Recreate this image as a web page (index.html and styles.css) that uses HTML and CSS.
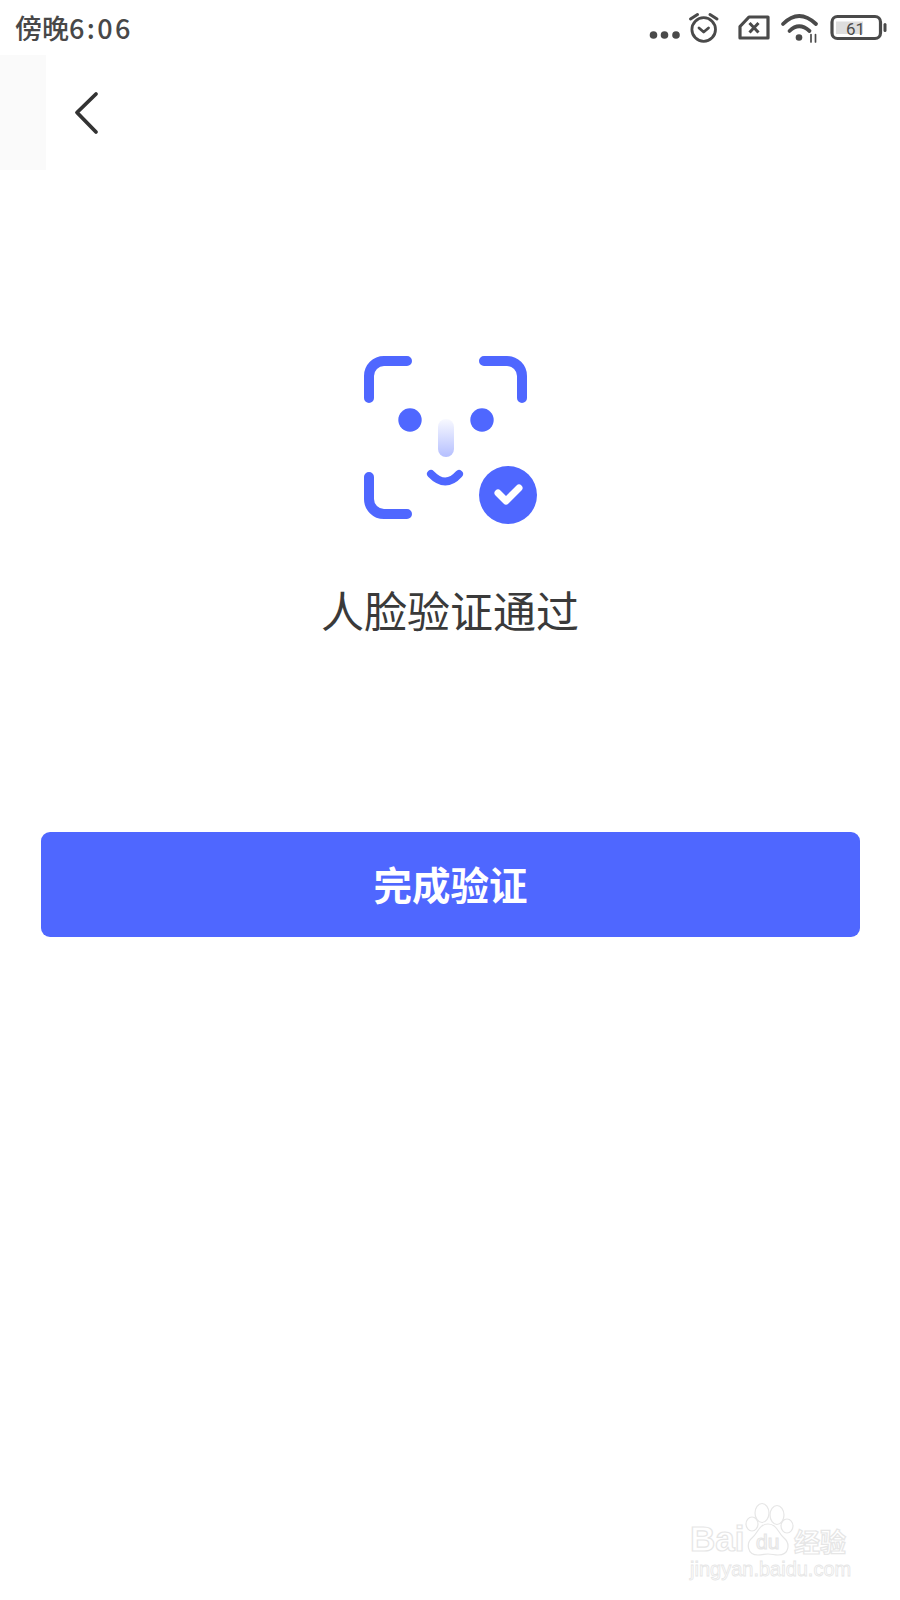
FILE: index.html
```html
<!DOCTYPE html>
<html lang="zh-CN">
<head>
    <meta charset="UTF-8">
    <meta name="viewport" content="width=device-width, initial-scale=1.0">
    <link rel="stylesheet" href="styles.css">
    <title>人脸验证通过</title>
</head>
<body>
    <div class="page">
        <div class="status-bar">
            <span class="status-time">傍晚<span class="status-digits">6:06</span></span>
            <svg class="status-icons" width="270" height="55" viewBox="0 0 270 55">
                <g fill="#4a4a4a">
                    <circle cx="23.5" cy="35" r="3.8"/>
                    <circle cx="34.5" cy="35" r="3.8"/>
                    <circle cx="46" cy="35" r="3.8"/>
                </g>
                <!-- alarm -->
                <g fill="none" stroke="#4a4a4a" stroke-linecap="round" stroke-linejoin="round">
                    <circle cx="73.7" cy="29.5" r="11.8" stroke-width="2.8"/>
                    <path d="M60.5 19L67.5 14.5M80 14.5L87 19" stroke-width="3"/>
                    <path d="M69 28L73.7 32L78.5 28" stroke-width="2.8"/>
                </g>
                <!-- sim -->
                <g fill="none" stroke="#4a4a4a" stroke-linejoin="round">
                    <path d="M110 26.500L119 17H138V38H110Z" stroke-width="3.200"/>
                    <path d="M119.500 23L128.500 32.500M128.500 23L119.500 32.500" stroke-width="3"/>
                </g>
                <!-- wifi -->
                <g fill="none" stroke="#4a4a4a" stroke-linecap="round">
                    <path d="M153 24Q169 8 186 24" stroke-width="3.800"/>
                    <path d="M159.500 31Q169 21.500 179.500 31" stroke-width="3.800"/>
                    <path d="M181 34.500V42M185.500 34.500V42" stroke-width="1.700"/>
                </g>
                <circle cx="169" cy="37.500" r="3.300" fill="#4a4a4a"/>
                <!-- battery -->
                <rect x="202" y="16.500" width="48.500" height="22" rx="5.500" fill="none" stroke="#4a4a4a" stroke-width="3.200"/>
                <rect x="206" y="21.500" width="27" height="12.500" fill="#dedede"/>
                <rect x="253.500" y="23" width="3" height="9" rx="1.500" fill="#4a4a4a"/>
                <text class="battery-num" x="225.500" y="34.500" text-anchor="middle">61</text>
            </svg>
        </div>

        <div class="nav-bar">
            <div class="nav-side"></div>
            <svg class="back" width="26" height="46" viewBox="0 0 26 46">
                <path d="M23 4L4 22.500L23 42" fill="none" stroke="#333" stroke-width="3.800" stroke-linecap="round" stroke-linejoin="round"/>
            </svg>
        </div>

        <div class="result">
            <svg class="face" width="220" height="200" viewBox="0 0 220 200">
                <defs>
                    <linearGradient id="nose" x1="0" y1="0" x2="0" y2="1">
                        <stop offset="0" stop-color="#4f67ff" stop-opacity="0.04"/>
                        <stop offset="1" stop-color="#4f67ff" stop-opacity="0.42"/>
                    </linearGradient>
                </defs>
                <g fill="none" stroke="#4f67ff" stroke-width="10" stroke-linecap="round">
                    <path d="M29 58V36A15 15 0 0 1 44 21H67"/>
                    <path d="M144 21H167A15 15 0 0 1 182 36V58"/>
                    <path d="M29 137V159A15 15 0 0 0 44 174H67"/>
                    <path d="M91 134Q105.500 149 119 134" stroke-width="8"/>
                </g>
                <circle cx="70" cy="80" r="11.700" fill="#4f67ff"/>
                <circle cx="142" cy="80" r="11.700" fill="#4f67ff"/>
                <rect x="98" y="79" width="16" height="38" rx="8" fill="url(#nose)"/>
                <circle cx="168" cy="155" r="29" fill="#4f67ff"/>
                <path d="M158 153L166 161L179 148" fill="none" stroke="#fff" stroke-width="7" stroke-linecap="round" stroke-linejoin="round"/>
            </svg>
            <h1 class="result-title">人脸验证通过</h1>
        </div>

        <div class="actions">
            <div class="btn-done">完成验证</div>
        </div>

        <svg class="watermark" width="240" height="120" viewBox="0 0 240 120">
            <g class="wm-line">
                <ellipse cx="102" cy="33" rx="7" ry="9.500"/>
                <ellipse cx="117" cy="35" rx="7" ry="9.500"/>
                <ellipse cx="92" cy="44" rx="6" ry="7"/>
                <ellipse cx="127" cy="46" rx="6" ry="7"/>
                <path d="M108 44C99 44 98 53 92 58C86 63 87 75 98 75C102 75 105 74 108 74C112 74 114 75 118 75C130 75 130 63 124 58C118 53 117 44 108 44Z"/>
                <text class="wm-bai" x="30" y="71">Bai</text>
                <text class="wm-du" x="96" y="69">du</text>
                <text class="wm-cn" x="134" y="72">经验</text>
                <text class="wm-url" x="30" y="96">jingyan.baidu.com</text>
            </g>
        </svg>
    </div>
</body>
</html>
```

FILE: styles.css
```css
* {
    box-sizing: border-box;
}
html, body {
    margin: 0;
    padding: 0;
}
body {
    background-color: #fff;
    font-family: "Noto Sans CJK SC", "Noto Sans", sans-serif;
}
.page {
    position: relative;
    width: 900px;
    height: 1600px;
    overflow: hidden;
}

/* status bar */
.status-bar {
    display: flex;
    justify-content: space-between;
    align-items: center;
    height: 55px;
    padding-left: 15px;
}
.status-time {
    font-size: 27px;
    font-weight: 500;
    color: #484848;
}
.status-digits {
    letter-spacing: 2.4px;
}
.battery-num {
    font-family: "Roboto", sans-serif;
    font-size: 17px;
    fill: #4a4a4a;
}

/* nav */
.nav-bar {
    display: flex;
    align-items: center;
    height: 115px;
}
.nav-side {
    width: 46px;
    height: 100%;
    background-color: #fafafa;
}
.back {
    margin-left: 27px;
}

/* result */
.result {
    display: flex;
    flex-direction: column;
    align-items: center;
    padding-top: 170px;
}
.face {
    display: block;
}
.result-title {
    margin: 39px 0 0;
    font-size: 43px;
    font-weight: 400;
    line-height: 60px;
    color: #3a3a3a;
}

/* button */
.actions {
    padding: 193px 40px 0 41px;
}
.btn-done {
    height: 105px;
    line-height: 103px;
    border-radius: 9px;
    background-color: #4f67ff;
    color: #fff;
    font-size: 38.5px;
    font-weight: 700;
    text-align: center;
}

/* watermark */
.watermark {
    position: absolute;
    right: 0;
    bottom: 0;
}
.wm-line {
    fill: #fff;
    stroke: #e6e6e6;
    stroke-width: 1.2;
}
.wm-bai {
    font-family: "Liberation Sans", sans-serif;
    font-size: 35px;
    font-weight: 700;
}
.wm-du {
    font-family: "Liberation Sans", sans-serif;
    font-size: 21px;
}
.wm-cn {
    font-size: 26px;
    font-weight: 700;
    line-height: 1;
}
.wm-url {
    font-family: "Liberation Sans", sans-serif;
    font-size: 20px;
    stroke-width: 0.8;
}
```
